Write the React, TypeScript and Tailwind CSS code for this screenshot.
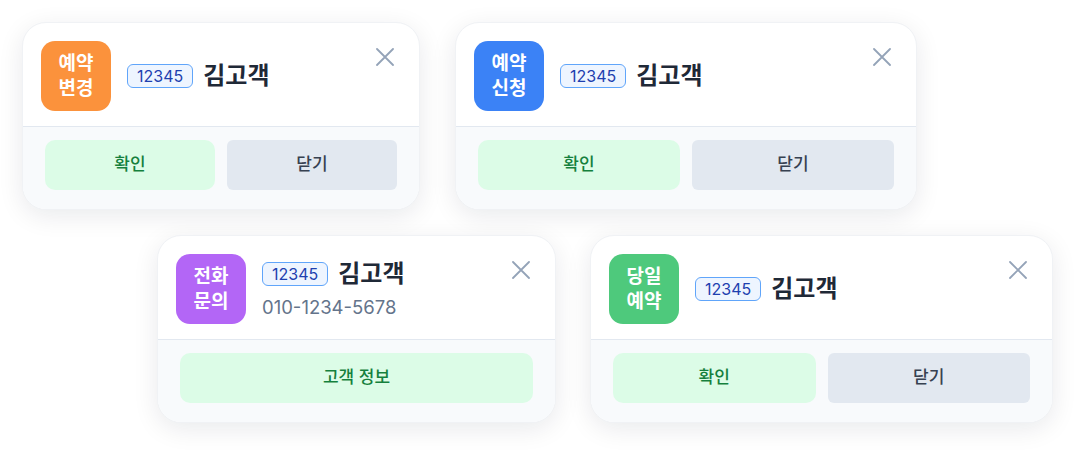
import React from "react";

type Card = {
    label: [string, string];
    color: string;
    width: string;
    phone?: string;
    single?: boolean;
};

const FONT = { fontFamily: 'Inter, "Noto Sans CJK KR", sans-serif' };

const CloseIcon = () => (
    <svg width="18" height="18" viewBox="0 0 18 18" fill="none" className="shrink-0">
        <path d="M1 1 17 17M17 1 1 17" stroke="#94a3b8" strokeWidth="1.8" strokeLinecap="round" />
    </svg>
);

const NoticeCard = ({ card }: { card: Card }) => (
    <div
        className={`${card.width} overflow-hidden rounded-[24px] border border-[#f0f2f5] bg-white shadow-[0_6px_26px_rgba(15,23,42,0.09)]`}
    >
        {/* Header */}
        <div className="flex items-start border-b border-[#e2e8f0] pt-[18px] pb-[15px] pl-[18px] pr-[25px]">
            <div
                className={`flex h-[70px] w-[70px] shrink-0 flex-col items-center justify-center rounded-[14px] ${card.color} text-[19px] font-bold leading-[25px] text-white`}
            >
                <span>{card.label[0]}</span>
                <span>{card.label[1]}</span>
            </div>
            <div className="ml-4 flex h-[70px] flex-col justify-center">
                <div className="flex items-center gap-[10px]">
                    <span className="rounded-md border border-[#60a5fa] bg-[#eef5ff] px-[9px] text-[16px] leading-[22px] text-[#1e40af]">
                        12345
                    </span>
                    <span className="text-[24px] font-bold leading-[28px] text-[#1f2937]">김고객</span>
                </div>
                {card.phone && (
                    <span className="mt-[8px] text-[18.5px] leading-[22px] text-[#64748b]">{card.phone}</span>
                )}
            </div>
            <div className="ml-auto mt-[7px]">
                <CloseIcon />
            </div>
        </div>

        {/* Footer */}
        <div className="flex gap-3 bg-[#f8fafc] px-[22px] pt-[13px] pb-[19px]">
            {card.single ? (
                <button className="h-[50px] flex-1 rounded-[10px] bg-[#dcfce7] text-[17px] font-medium text-[#15803d]">
                    고객 정보
                </button>
            ) : (
                <>
                    <button className="h-[50px] flex-1 rounded-[10px] bg-[#dcfce7] text-[17px] font-medium text-[#15803d]">
                        확인
                    </button>
                    <button className="h-[50px] flex-1 rounded-[6px] bg-[#e2e8f0] text-[17px] font-medium text-[#374151]">
                        닫기
                    </button>
                </>
            )}
        </div>
    </div>
);

const TOP: Card[] = [
    { label: ["예약", "변경"], color: "bg-[#fb923c]", width: "w-[398px]" },
    { label: ["예약", "신청"], color: "bg-[#3b82f6]", width: "w-[462px]" },
];

const BOTTOM: Card[] = [
    { label: ["전화", "문의"], color: "bg-[#b366f6]", width: "w-[399px]", phone: "010-1234-5678", single: true },
    { label: ["당일", "예약"], color: "bg-[#4ec97c]", width: "w-[463px]" },
];

export default function App() {
    return (
        <div className="flex min-h-[452px] w-[1080px] flex-col gap-[25px] bg-white pt-[22px]" style={FONT}>
            <div className="flex gap-[35px] pl-[22px]">
                {TOP.map((c) => (
                    <NoticeCard key={c.label.join("")} card={c} />
                ))}
            </div>
            <div className="flex gap-[34px] pl-[157px]">
                {BOTTOM.map((c) => (
                    <NoticeCard key={c.label.join("")} card={c} />
                ))}
            </div>
        </div>
    );
}
